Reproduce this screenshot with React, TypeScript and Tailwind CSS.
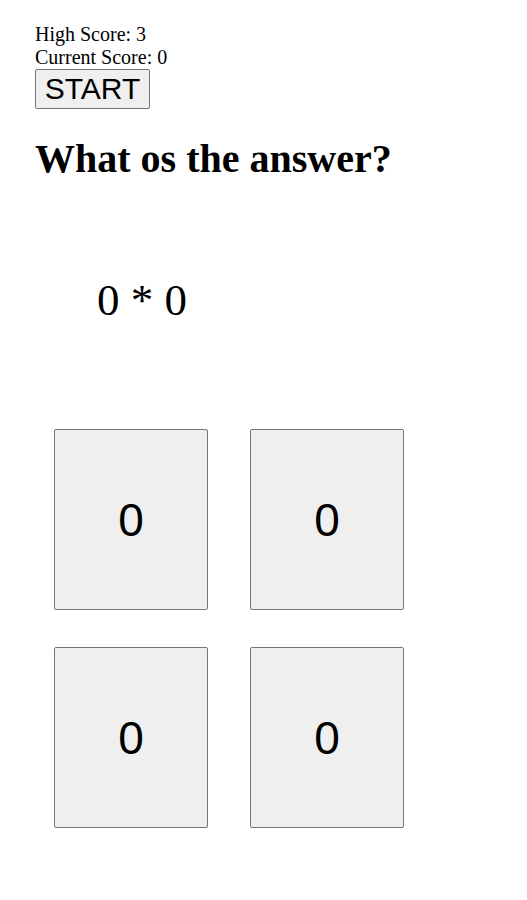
const answers = [0, 0, 0, 0];

export default function App() {
  return (
    <div className="min-h-[900px] bg-white pl-[35px] pt-[23px] font-['Liberation_Serif',serif] text-black">
      {/* scores */}
      <div className="text-[20px] leading-[23px]">High Score: 3</div>
      <div className="text-[20px] leading-[23px]">Current Score: 0</div>
      <button className="flex h-[40px] w-[115px] items-center justify-center rounded-[2px] border border-[#767676] bg-[#efefef] font-['Liberation_Sans',sans-serif] text-[30px] leading-none">
        START
      </button>

      <h1 className="mt-[27px] text-[40px] font-bold leading-[46px]">What os the answer?</h1>

      {/* question */}
      <div className="ml-[62px] mt-[93px] text-[45px] leading-[50px]">0 * 0</div>

      {/* answer cards */}
      <div className="ml-[19px] mt-[104px] grid grid-cols-[154px_154px] gap-x-[42px] gap-y-[37px]">
        {answers.map((a, i) => (
          <button
            key={i}
            className="flex h-[181px] w-[154px] items-center justify-center rounded-[2px] border border-[#767676] bg-[#efefef] font-['Liberation_Sans',sans-serif] text-[46px] leading-none"
          >
            {a}
          </button>
        ))}
      </div>
    </div>
  );
}
